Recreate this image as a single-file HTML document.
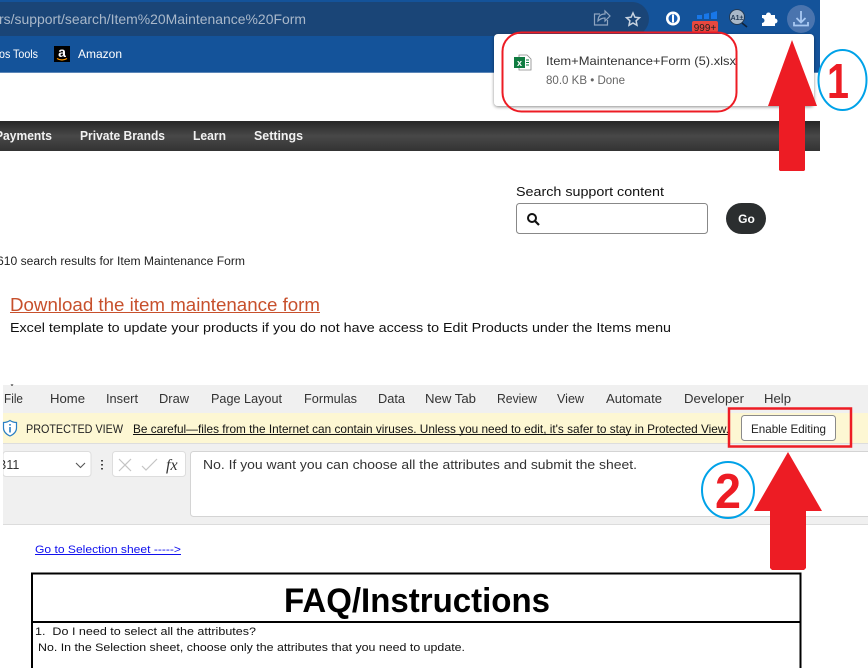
<!DOCTYPE html>
<html><head><meta charset="utf-8"><style>
html,body{margin:0;padding:0;background:#fff;width:868px;height:668px;overflow:hidden}
svg{display:block}
text{font-family:"Liberation Sans",sans-serif;white-space:pre}
</style></head><body>
<svg width="868" height="668" viewBox="0 0 868 668" xmlns="http://www.w3.org/2000/svg">
<defs>
<linearGradient id="nav" x1="0" y1="0" x2="0" y2="1"><stop offset="0" stop-color="#272727"/><stop offset=".5" stop-color="#484848"/><stop offset="1" stop-color="#333"/></linearGradient>
<filter id="sh" x="-5%" y="-10%" width="110%" height="125%"><feDropShadow dx="0" dy="1" stdDeviation="1.5" flood-color="#000" flood-opacity=".45"/></filter>
</defs>
<rect width="868" height="668" fill="#fff"/>
<!-- browser chrome -->
<rect x="0" y="0" width="820" height="72" fill="#14539a"/>
<rect x="0" y="72" width="820" height="1" fill="#5b86b8"/>
<path d="M0 2H632a17 17 0 0 1 0 34H0z" fill="#1a4577"/>
<text x="-1" y="24" font-size="14" fill="#a9b8ca" textLength="307" lengthAdjust="spacingAndGlyphs">rs/support/search/Item%20Maintenance%20Form</text>
<text x="-1" y="58" font-size="12" fill="#fff" textLength="39" lengthAdjust="spacingAndGlyphs">os Tools</text>
<rect x="54" y="46" width="16" height="16" fill="#000"/>
<text x="62" y="57" font-size="14" font-weight="700" fill="#fff" text-anchor="middle">a</text>
<path d="M57 58.500q5 3 10 0" stroke="#f90" stroke-width="1.200" fill="none"/>
<text x="78" y="58" font-size="12" fill="#fff" textLength="44" lengthAdjust="spacingAndGlyphs">Amazon</text>
<!-- toolbar icons -->
<g fill="none" stroke="#8fa5c0" stroke-width="1.200">
<path d="M600 14h-5.500v11h13v-5"/><path d="M598 21c0-5 3-7 7-7v-3l5 5-5 5v-3c-3 0-5 1-7 3z"/>
</g>
<path d="M633 13l1.900 4.200 4.600.5-3.400 3.100.9 4.500-4-2.300-4 2.300.9-4.500-3.400-3.100 4.600-.5z" fill="none" stroke="#c8d3e0" stroke-width="1.500"/>
<circle cx="673" cy="18.500" r="7" fill="#fff"/><circle cx="673" cy="18.500" r="4.500" fill="#1a5fb4"/><rect x="672" y="14.500" width="2" height="8" fill="#fff"/>
<path d="M697 15h5v4h-5zM704 14l5-1v6h-5zM711 13l6-2v8h-6z" fill="#1877e8"/>
<rect x="692" y="21" width="26" height="11" rx="2" fill="#e8483f"/>
<text x="705" y="31" font-size="10" fill="#222" text-anchor="middle">999+</text>
<circle cx="737" cy="17" r="7.500" fill="#a9b8c8" stroke="#223a55" stroke-width="1"/>
<text x="737" y="20" font-size="7" font-weight="700" fill="#223a55" text-anchor="middle">A1±</text>
<path d="M742 23l5 4" stroke="#10233a" stroke-width="1.600"/>
<path d="M762 15h4a2.500 2.500 0 0 1 5 0h4v3.500a2.500 2.500 0 0 1 0 5V26h-13v-3a2.500 2.500 0 0 0 0-5z" fill="#fff"/>
<circle cx="801" cy="19" r="14" fill="#4a74ae"/>
<g fill="none" stroke="#a9c9f2" stroke-width="1.800"><path d="M801 11v11M796.500 18l4.500 4.500 4.500-4.500"/><path d="M794 22v3.500h14V22"/></g>
<!-- site nav -->
<rect x="0" y="121" width="820" height="30" fill="url(#nav)"/>
<g font-size="12.500" font-weight="700" fill="#f2f2f2">
<text x="-5" y="140" textLength="57" lengthAdjust="spacingAndGlyphs">Payments</text>
<text x="80" y="140" textLength="85" lengthAdjust="spacingAndGlyphs">Private Brands</text>
<text x="193" y="140" textLength="33" lengthAdjust="spacingAndGlyphs">Learn</text>
<text x="254" y="140" textLength="49" lengthAdjust="spacingAndGlyphs">Settings</text>
</g>
<!-- popup -->
<rect x="494" y="34" width="320" height="72" rx="4" fill="#fff" filter="url(#sh)"/>
<path d="M519 55h8l4 4v11h-12z" fill="#fff" stroke="#888" stroke-width=".8"/>
<rect x="514" y="57" width="11" height="11" fill="#107c41"/>
<text x="519.500" y="66" font-size="9" font-weight="700" fill="#fff" text-anchor="middle">x</text>
<path d="M526 60h3M526 62.500h3M526 65h3" stroke="#107c41" stroke-width="1"/>
<text x="546" y="65" font-size="12" fill="#333" textLength="190" lengthAdjust="spacingAndGlyphs">Item+Maintenance+Form (5).xlsx</text>
<text x="546" y="84" font-size="12" fill="#666" textLength="79" lengthAdjust="spacingAndGlyphs">80.0 KB • Done</text>
<rect x="502.500" y="32.500" width="234" height="79" rx="19" fill="none" stroke="#ed1c24" stroke-width="2"/>
<!-- search -->
<text x="516" y="196" font-size="13" fill="#111" textLength="148" lengthAdjust="spacingAndGlyphs">Search support content</text>
<rect x="516.500" y="203.500" width="191" height="30" rx="3" fill="#fff" stroke="#888"/>
<circle cx="532" cy="218" r="4" fill="none" stroke="#111" stroke-width="2"/><path d="M535 221l4 4" stroke="#111" stroke-width="2.200"/>
<rect x="726" y="203" width="40" height="31" rx="15.500" fill="#2b2e2f"/>
<text x="746.500" y="223" font-size="12" font-weight="700" fill="#fff" text-anchor="middle">Go</text>
<!-- results -->
<text x="-3" y="265" font-size="11.500" fill="#222" textLength="248" lengthAdjust="spacingAndGlyphs">610 search results for Item Maintenance Form</text>
<text x="10" y="311" font-size="18" fill="#c7502c" textLength="310" lengthAdjust="spacingAndGlyphs">Download the item maintenance form</text>
<rect x="10" y="312" width="310" height="1" fill="#c7502c"/>
<text x="10" y="332" font-size="13" fill="#111" textLength="661" lengthAdjust="spacingAndGlyphs">Excel template to update your products if you do not have access to Edit Products under the Items menu</text>
<!-- excel -->
<rect x="3" y="385" width="865" height="140" fill="#f0f0f0"/>
<g font-size="12.500" fill="#333">
<text x="4" y="403" textLength="19" lengthAdjust="spacingAndGlyphs">File</text>
<text x="50" y="403" textLength="35" lengthAdjust="spacingAndGlyphs">Home</text>
<text x="106" y="403" textLength="32" lengthAdjust="spacingAndGlyphs">Insert</text>
<text x="159" y="403" textLength="30" lengthAdjust="spacingAndGlyphs">Draw</text>
<text x="211" y="403" textLength="71" lengthAdjust="spacingAndGlyphs">Page Layout</text>
<text x="304" y="403" textLength="53" lengthAdjust="spacingAndGlyphs">Formulas</text>
<text x="378" y="403" textLength="27" lengthAdjust="spacingAndGlyphs">Data</text>
<text x="425" y="403" textLength="51" lengthAdjust="spacingAndGlyphs">New Tab</text>
<text x="497" y="403" textLength="40" lengthAdjust="spacingAndGlyphs">Review</text>
<text x="557" y="403" textLength="27" lengthAdjust="spacingAndGlyphs">View</text>
<text x="606" y="403" textLength="56" lengthAdjust="spacingAndGlyphs">Automate</text>
<text x="684" y="403" textLength="60" lengthAdjust="spacingAndGlyphs">Developer</text>
<text x="764" y="403" textLength="27" lengthAdjust="spacingAndGlyphs">Help</text>
</g>
<path d="M10.500 384.500h3l-1.500 1.500z" fill="#111"/>
<rect x="3" y="413" width="865" height="30" fill="#fdf7d3"/>
<rect x="3" y="443" width="865" height="1" fill="#ddd"/>
<path d="M3.500 422.500q3.500 0 6.500-2 3 2 6.500 2v5.500q0 5-6.500 8-6.500-3-6.500-8z" fill="#fff" stroke="#2a7fc4" stroke-width="1.200"/>
<rect x="9.200" y="424" width="1.600" height="1.600" fill="#2a7fc4"/><rect x="9.200" y="427" width="1.600" height="5.500" fill="#2a7fc4"/>
<text x="26" y="433" font-size="12" fill="#222" textLength="97" lengthAdjust="spacingAndGlyphs">PROTECTED VIEW</text>
<text x="133" y="433" font-size="12" fill="#111" textLength="596" lengthAdjust="spacingAndGlyphs">Be careful—files from the Internet can contain viruses. Unless you need to edit, it's safer to stay in Protected View.</text>
<rect x="133" y="434" width="596" height="1" fill="#111"/>
<rect x="741.500" y="415.500" width="94" height="25" rx="3" fill="#fff" stroke="#8a8a8a"/>
<text x="788.500" y="433" font-size="12" fill="#222" text-anchor="middle" textLength="75" lengthAdjust="spacingAndGlyphs">Enable Editing</text>
<rect x="729" y="408.500" width="122" height="38" fill="none" stroke="#ed1c24" stroke-width="2.500"/>
<rect x="3" y="451.500" width="88" height="25" rx="3" fill="#fff" stroke="#ddd"/>
<text x="-2" y="469" font-size="12.500" fill="#333">B11</text>
<rect x="0" y="451" width="3" height="26" fill="#fff"/>
<path d="M76 463l4.500 4.500 4.500-4.500" fill="none" stroke="#555" stroke-width="1.100"/>
<path d="M102 460v1.500M102 464v1.500M102 468v1.500" stroke="#444" stroke-width="2"/>
<rect x="112.500" y="451.500" width="73" height="25" rx="3" fill="#fff" stroke="#ddd"/>
<path d="M119 459l12 12M131 459l-12 12M142 466l4 4 11-11" fill="none" stroke="#c4c4c4" stroke-width="1.200"/>
<text x="166" y="470" font-size="16" font-style="italic" style="font-family:'Liberation Serif',serif" fill="#333">fx</text>
<rect x="190.500" y="451.500" width="690" height="65" rx="3" fill="#fff" stroke="#d4d4d4"/>
<text x="203" y="469" font-size="13" fill="#333" textLength="434" lengthAdjust="spacingAndGlyphs">No. If you want you can choose all the attributes and submit the sheet.</text>
<rect x="3" y="524" width="865" height="1" fill="#dcdcdc"/>
<!-- sheet -->
<text x="35" y="553" font-size="11" fill="#1010ee" textLength="146" lengthAdjust="spacingAndGlyphs">Go to Selection sheet -----&gt;</text>
<rect x="35" y="554" width="146" height="1" fill="#1010ee"/>
<path d="M32 668V573.500H800.500V668" fill="none" stroke="#000" stroke-width="2"/>
<rect x="32" y="621" width="769" height="2" fill="#000"/>
<text x="417" y="612" font-size="34" font-weight="700" fill="#000" text-anchor="middle" textLength="266" lengthAdjust="spacingAndGlyphs">FAQ/Instructions</text>
<text x="35" y="635" font-size="11" fill="#111" textLength="221" lengthAdjust="spacingAndGlyphs">1.  Do I need to select all the attributes?</text>
<text x="38" y="651" font-size="11" fill="#111" textLength="427" lengthAdjust="spacingAndGlyphs">No. In the Selection sheet, choose only the attributes that you need to update.</text>
<!-- annotations -->
<path d="M792 40L817 106H805V170l-1 1H780l-1-1V106H768z" fill="#ed1c24"/>
<ellipse cx="842.500" cy="80" rx="24" ry="30" fill="none" stroke="#00a2e8" stroke-width="2"/>
<text x="827" y="98" font-size="49" font-weight="700" fill="#ed1c24" textLength="22" lengthAdjust="spacingAndGlyphs">1</text>
<path d="M788 452L822 511H806V568l-2 2H772l-2-2V511H754z" fill="#ed1c24"/>
<ellipse cx="728" cy="490" rx="26" ry="28" fill="none" stroke="#00a2e8" stroke-width="2"/>
<text x="715" y="508" font-size="49" font-weight="700" fill="#ed1c24" textLength="26" lengthAdjust="spacingAndGlyphs">2</text>
</svg>
</body></html>
